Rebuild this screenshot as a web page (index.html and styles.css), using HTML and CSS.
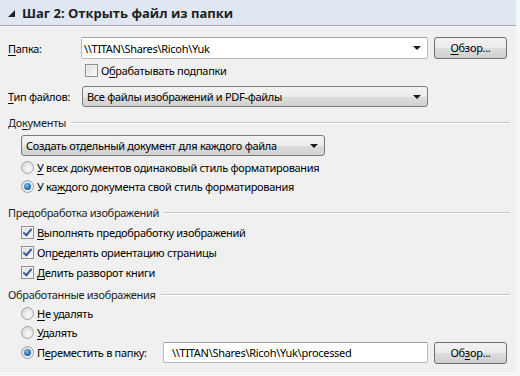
FILE: index.html
```html
<!DOCTYPE html>
<html lang="ru">
<head>
  <meta charset="UTF-8">
  <title>Шаг 2: Открыть файл из папки</title>
  <link rel="stylesheet" href="styles.css">
</head>
<body>
  <div class="panel">
    <div class="header">
      <span class="tri"></span>
      <span>Шаг 2: Открыть файл из папки</span>
    </div>

    <div class="body">
      <div class="row row-folder">
        <label class="lbl"><u>П</u>апка:</label>
        <div class="combo edit">
          <span class="val">\\TITAN\Shares\Ricoh\Yuk</span>
          <span class="arrow"></span>
        </div>
        <button class="btn"><u>О</u>бзор...</button>
      </div>

      <div class="opt row-sub">
        <span class="check"></span>
        <span>О<u>б</u>рабатывать подпапки</span>
      </div>

      <div class="row row-type">
        <label class="lbl"><u>Т</u>ип файлов:</label>
        <div class="combo drop">
          <span class="val">Все файлы изображений и PDF-файлы</span>
          <span class="arrow"></span>
        </div>
      </div>

      <div class="group g-docs">До<u>к</u>ументы</div>
      <div class="items">
        <div class="combo drop docs-select">
          <span class="val">Создать отдельный документ для каждого файла</span>
          <span class="arrow"></span>
        </div>
        <div class="opt first">
          <span class="radio"></span>
          <span><u>У</u> всех документов одинаковый стиль форматирования</span>
        </div>
        <div class="opt">
          <span class="radio on"></span>
          <span>У ка<u>ж</u>дого документа свой стиль форматирования</span>
        </div>
      </div>

      <div class="group g-pre">Предобработка изображений</div>
      <div class="items">
        <div class="opt first tall">
          <span class="check on"></span>
          <span><u>В</u>ыполнять предобработку изображений</span>
        </div>
        <div class="opt tall">
          <span class="check on"></span>
          <span>Оп<u>р</u>еделять ориентацию страницы</span>
        </div>
        <div class="opt tall">
          <span class="check on"></span>
          <span><u>Д</u>елить разворот книги</span>
        </div>
      </div>

      <div class="group g-done">Обработанные изображения</div>
      <div class="items">
        <div class="opt first">
          <span class="radio"></span>
          <span><u>Н</u>е удалять</span>
        </div>
        <div class="opt">
          <span class="radio"></span>
          <span><u>У</u>далять</span>
        </div>
        <div class="opt move">
          <span class="radio on"></span>
          <span class="move-lbl">П<u>е</u>реместить в папку:</span>
          <div class="combo edit move-input">
            <span class="val">\\TITAN\Shares\Ricoh\Yuk\processed</span>
          </div>
          <button class="btn">Об<u>з</u>ор...</button>
        </div>
      </div>
    </div>
  </div>
</body>
</html>
```

FILE: styles.css
```css
* {
  box-sizing: border-box;
}

body {
  margin: 0;
  background: #f7f7f7;
  font-family: "Noto Sans", "Open Sans", sans-serif;
  font-size: 11px;
  letter-spacing: -0.3px;
  color: #000;
}

.panel {
  width: 516px;
  height: 372px;
  background: #f0f0f0;
}

u {
  text-decoration: underline;
  text-underline-offset: 2px;
}

/* header */
.header {
  height: 26px;
  background: #dfe8f2;
  border-bottom: 1px solid #a5abb3;
  display: flex;
  align-items: center;
  padding-left: 8px;
  font-family: "Open Sans", sans-serif;
  font-weight: bold;
  font-size: 13px;
  letter-spacing: 0;
  color: #1e1e1e;
}

.tri {
  width: 0;
  height: 0;
  border-left: 7px solid transparent;
  border-bottom: 7px solid #222;
  margin-right: 7px;
  margin-top: 1px;
}

.body {
  padding: 0 6px 0 8px;
}

/* rows with a label column */
.row {
  display: flex;
  align-items: center;
}

.lbl {
  width: 73px;
}

.row-folder {
  height: 24px;
  margin-top: 10px;
}

.row-type {
  height: 21px;
  margin-top: 6px;
}

/* combo boxes */
.combo {
  position: relative;
  display: flex;
  align-items: center;
  height: 22px;
  padding-left: 4px;
  white-space: nowrap;
}

.combo.edit {
  background: #fff;
  border: 1px solid #b4b9c0;
  border-top-color: #9ea3ab;
  border-radius: 2px;
  padding-left: 2px;
}

.combo.drop {
  height: 21px;
  border: 1px solid #7a7a7a;
  border-radius: 3px;
  background: linear-gradient(#f3f3f3, #ebebeb 50%, #dddddd 51%, #d1d1d1);
}

.row .combo {
  width: 347px;
}

.row .combo.drop {
  width: 346px;
  margin-left: 1px;
}

.arrow {
  position: absolute;
  right: 6px;
  top: 8px;
  width: 0;
  height: 0;
  border-left: 4px solid transparent;
  border-right: 4px solid transparent;
  border-top: 4px solid #1a1a1a;
}

/* buttons */
.btn {
  width: 73px;
  height: 22px;
  margin-left: 6px;
  border: 1px solid #707070;
  border-radius: 3px;
  background: linear-gradient(#f2f2f2, #ebebeb 50%, #dddddd 51%, #cfcfcf);
  font-family: inherit;
  font-size: 11px;
  letter-spacing: inherit;
  color: #000;
  padding: 0 0 1px;
}

/* check boxes and radios */
.opt {
  display: flex;
  align-items: center;
  height: 19px;
  white-space: nowrap;
}

.opt.tall {
  height: 20px;
}

.row-sub {
  height: 20px;
  margin-left: 77px;
}

.check,
.radio {
  flex: none;
  width: 13px;
  height: 13px;
  margin-right: 3px;
  position: relative;
}

.check {
  border: 1px solid #8e8f8f;
  background: linear-gradient(135deg, #dcdcdc, #fbfbfb);
  box-shadow: inset 0 0 0 1px #f4f4f4;
}

.check.on::after {
  content: "";
  position: absolute;
  left: 3px;
  top: 0px;
  width: 3px;
  height: 7px;
  border: solid #3c5a9a;
  border-width: 0 2px 2px 0;
  transform: rotate(40deg);
}

.radio {
  border: 1px solid #a0a4a8;
  border-radius: 50%;
  background: radial-gradient(circle at 60% 65%, #fbfbfb 0, #e4e4e4 55%, #cfcfcf 100%);
}

.radio.on::after {
  content: "";
  position: absolute;
  left: 2px;
  top: 2px;
  width: 7px;
  height: 7px;
  border-radius: 50%;
  background: radial-gradient(circle at 40% 35%, #7fc2ef, #1b5f9e 70%, #0e3f70);
}

/* groups */
.group {
  display: flex;
  align-items: center;
  height: 16px;
  color: #1e1e1e;
}

.group::after {
  content: "";
  flex: 1;
  height: 1px;
  margin-left: 5px;
  background: #bfc6cc;
  box-shadow: 0 1px 0 #fff;
}

.g-docs {
  margin-top: 7px;
}

.g-pre {
  margin-top: 8px;
}

.g-done {
  margin-top: 4px;
}

.items {
  padding-left: 13px;
}

.docs-select {
  width: 304px;
  margin-top: 5px;
}

.items .opt.first {
  margin-top: 2px;
}

.move {
  height: 21px;
}

.move-lbl {
  width: 126px;
}

.move-input {
  width: 265px;
  height: 21px;
}

.combo.move-input {
  padding-left: 8px;
}
```
